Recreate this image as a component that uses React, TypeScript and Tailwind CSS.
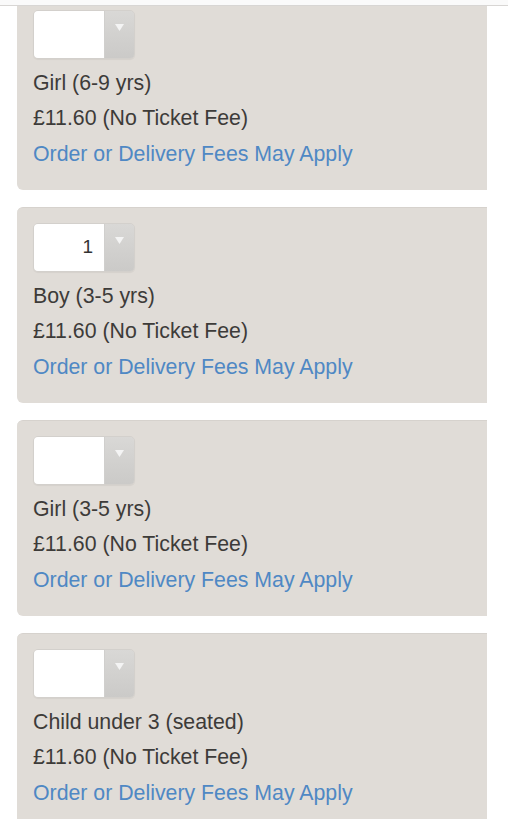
const tickets = [
  { name: 'Girl (6-9 yrs)', qty: '' },
  { name: 'Boy (3-5 yrs)', qty: '1' },
  { name: 'Girl (3-5 yrs)', qty: '' },
  { name: 'Child under 3 (seated)', qty: '' },
]

function QtySelect({ value }: { value: string }) {
  return (
    <div className="w-[102px] h-[49px] flex rounded-[5px] border border-[#d3d0cc] overflow-hidden shadow-[0_1px_1px_rgba(0,0,0,0.05)]">
      <div className="w-[70px] h-full bg-white flex items-center justify-end pr-[11px] text-[19px] text-[#333]">
        {value}
      </div>
      <div className="flex-1 h-full bg-gradient-to-b from-[#d9d8d6] to-[#cbcac8] border-l border-[#d0cfcd] flex justify-center pt-[13px]">
        <svg width="9" height="7" viewBox="0 0 9 7">
          <path d="M0 0 H9 L4.5 7 Z" fill="#f4f4f4" />
        </svg>
      </div>
    </div>
  )
}

export default function App() {
  return (
    <div className="w-[508px] h-[819px] bg-white overflow-hidden relative font-['Liberation_Sans',Arial,sans-serif]">
      <div className="absolute top-0 left-0 right-0 h-[6px] bg-[#fafafa] border-b border-[#d8d6d4] z-10" />
      <div className="flex flex-col gap-[17px] pl-[17px] pr-[21px] -mt-[6px]">
        {tickets.map((t) => (
          <div
            key={t.name}
            className="h-[196px] shrink-0 bg-[#e0dcd7] rounded-l-[6px] border-t border-[#d6d2cd] pl-[16px] pt-[15px] flex flex-col">
            <QtySelect value={t.qty} />
            <div className="mt-[7px] text-[21.3px] leading-[35px] text-[#3d3b39]">{t.name}</div>
            <div className="text-[21.3px] leading-[35px] text-[#3d3b39]">£11.60 (No Ticket Fee)</div>
            <div className="text-[21.3px] leading-[36px] text-[#4f88c4]">Order or Delivery Fees May Apply</div>
          </div>
        ))}
      </div>
    </div>
  )
}
